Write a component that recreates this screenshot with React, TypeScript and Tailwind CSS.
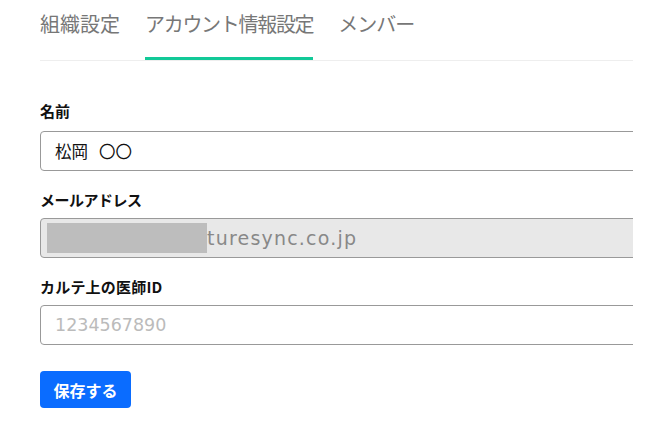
import React from "react";

const tabs = [
  { label: "組織設定", track: "tracking-[0px]" },
  { label: "アカウント情報設定", track: "tracking-[-1.3px]" },
  { label: "メンバー", track: "tracking-[-1px]" },
];

const font = { fontFamily: '"Noto Sans CJK JP", "Noto Sans", sans-serif' };

export default function App() {
  const active = 1;

  return (
    <div className="min-h-[434px] bg-white px-10 font-['Noto_Sans_CJK_JP',sans-serif]">
      <div className="w-[593px] overflow-hidden">
        <div className="flex gap-[25px] border-b border-[#eeeeee] h-[61px]">
          {tabs.map((t, i) => (
            <div
              key={t.label}
              className={
                "pt-[9px] text-[20px] leading-[30px] text-[#777777] h-[60px] " +
                t.track +
                (i === active ? " border-b-[3px] border-[#12c998]" : "")
              }
            >
              {t.label}
            </div>
          ))}
        </div>

        <div className="pt-[40px]">
          <label className="block text-[15px] font-bold leading-[20px] text-[#111]">名前</label>
          <div className="mt-[10px] w-[620px] h-[40px] rounded-[4px] border border-[#999] flex items-center pl-[14px] text-[16.5px] text-[#111]">
            松岡&nbsp;&nbsp;&nbsp;〇〇
          </div>

          <label className="block mt-[19px] text-[15px] font-bold leading-[20px] text-[#111] tracking-[-0.5px]">
            メールアドレス
          </label>
          <div className="mt-[8px] w-[620px] h-[40px] rounded-[4px] border border-[#999] bg-[#e8e8e8] flex items-center pl-[6px]">
            <div className="w-[160px] h-[30px] bg-[#bdbdbd]" />
            <span className="text-[19px] text-[#888] font-['DejaVu_Sans',sans-serif] tracking-[1.2px]">turesync.co.jp</span>
          </div>

          <label className="block mt-[19px] text-[15px] font-bold leading-[20px] text-[#111] tracking-[0.2px]">
            カルテ上の医師ID
          </label>
          <div className="mt-[8px] w-[620px] h-[40px] rounded-[4px] border border-[#999] flex items-center pl-[14px]">
            <span className="text-[17.5px] text-[#bbbbbb] font-['DejaVu_Sans',sans-serif]">1234567890</span>
          </div>

          <button
            style={font}
            className="mt-[26px] w-[91px] h-[37px] rounded-[4px] bg-[#0a6cff] text-white text-[16px] font-bold"
          >
            保存する
          </button>
        </div>
      </div>
    </div>
  );
}
